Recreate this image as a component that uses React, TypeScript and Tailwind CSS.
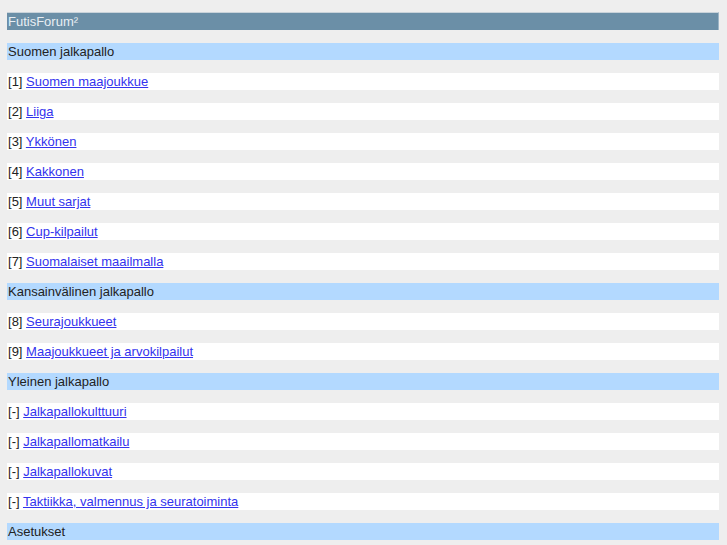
const sections = [
  {
    title: 'Suomen jalkapallo',
    items: [
      ['1', 'Suomen maajoukkue'],
      ['2', 'Liiga'],
      ['3', 'Ykkönen'],
      ['4', 'Kakkonen'],
      ['5', 'Muut sarjat'],
      ['6', 'Cup-kilpailut'],
      ['7', 'Suomalaiset maailmalla'],
    ],
  },
  {
    title: 'Kansainvälinen jalkapallo',
    items: [
      ['8', 'Seurajoukkueet'],
      ['9', 'Maajoukkueet ja arvokilpailut'],
    ],
  },
  {
    title: 'Yleinen jalkapallo',
    items: [
      ['-', 'Jalkapallokulttuuri'],
      ['-', 'Jalkapallomatkailu'],
      ['-', 'Jalkapallokuvat'],
      ['-', 'Taktiikka, valmennus ja seuratoiminta'],
    ],
  },
  { title: 'Asetukset', items: [] },
]

export default function App() {
  return (
    <div className="min-h-[545px] bg-[#eeeeee] pt-[12px] pl-[7px] pr-[8px] text-[13px] leading-[17px] font-['Liberation_Sans',Arial,sans-serif]">
      <div className="flex flex-col gap-[13px]">
        <div className="h-[18px] border-t border-t-[#c9d3da] border-r border-r-[#9db5c6] bg-[#6b8fa7] text-[#e8eef3] pl-[1px]">
          FutisForum²
        </div>
        {sections.map((s) => (
          <div key={s.title} className="flex flex-col gap-[13px]">
            <div className="h-[17px] bg-[#b3d9ff] text-[#222222] pl-[1px]">{s.title}</div>
            {s.items.map(([n, name]) => (
              <div key={name} className="h-[17px] bg-white text-[#222222] pl-[1px]">
                [{n}] <a href="#" className="text-[#3333ee] underline">{name}</a>
              </div>
            ))}
          </div>
        ))}
      </div>
    </div>
  )
}
